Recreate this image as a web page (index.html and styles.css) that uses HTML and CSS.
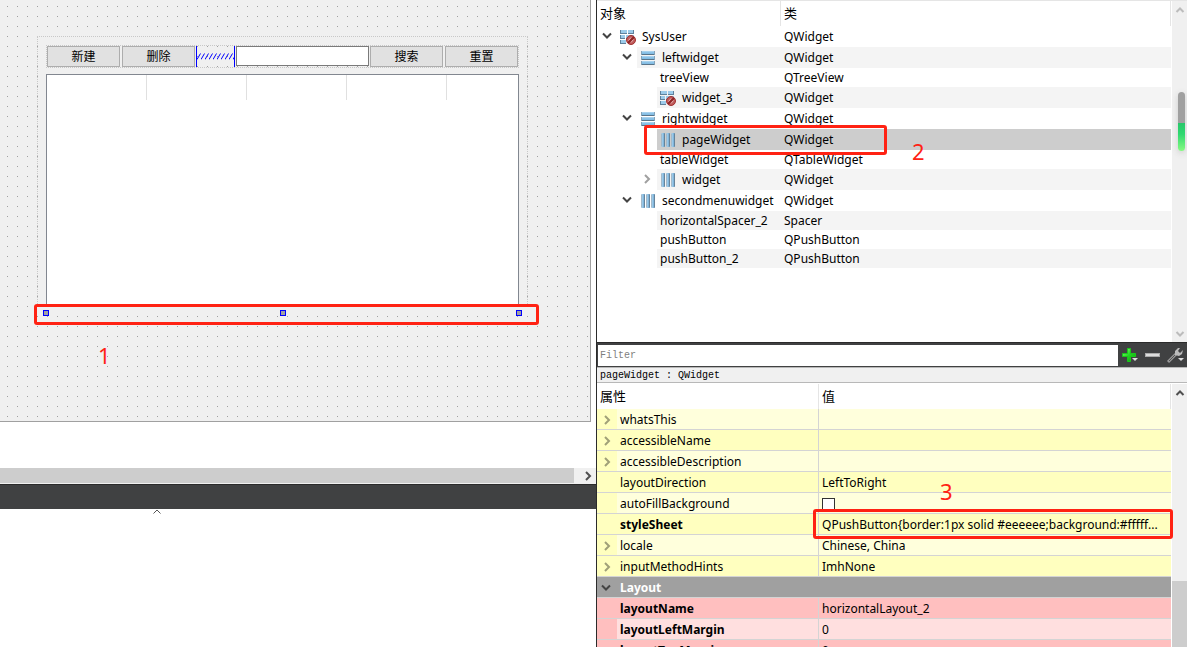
FILE: index.html
```html
<!DOCTYPE html>
<html lang="zh-CN">
<head>
<meta charset="utf-8">
<title>Qt Designer</title>
<link rel="stylesheet" href="styles.css">
</head>
<body>
<svg class="defs" aria-hidden="true">
  <defs>
    <linearGradient id="bar-h" x1="0" y1="0" x2="0" y2="1"><stop offset="0" stop-color="#b5d9f2"/><stop offset=".5" stop-color="#7fbbe3"/><stop offset="1" stop-color="#8fc3e6"/></linearGradient>
    <linearGradient id="bar-v" x1="0" y1="0" x2="1" y2="0"><stop offset="0" stop-color="#c4e0f4"/><stop offset=".5" stop-color="#8dc0e4"/><stop offset="1" stop-color="#5d95bd"/></linearGradient>
    <linearGradient id="green" x1="0" y1="0" x2="1" y2="1"><stop offset="0" stop-color="#8dff7a"/><stop offset=".5" stop-color="#22d422"/><stop offset="1" stop-color="#08a008"/></linearGradient>
    <symbol id="down" viewBox="0 0 10 8"><path d="M1 1.500 5 5.500 9 1.500" fill="none" stroke="#444" stroke-width="2"/></symbol>
    <symbol id="right" viewBox="0 0 8 10"><path d="M2 1 6 5 2 9" fill="none" stroke="currentColor" stroke-width="2"/></symbol>
    <symbol id="up" viewBox="0 0 10 8"><path d="M1.500 6 5 2.500 8.500 6" fill="none" stroke="currentColor" stroke-width="2"/></symbol>
    <symbol id="vbox" viewBox="0 0 16 16"><g fill="url(#bar-h)"><rect x="1" y="1" width="14" height="4" rx="1"/><rect x="1" y="6" width="14" height="4" rx="1"/><rect x="1" y="11" width="14" height="4" rx="1"/></g><path d="M1.500 4.500h13M1.500 9.500h13M1.500 14.500h13" stroke="#5b7488"/><path d="M1.500 1v3M14.500 1v3M1.500 6v3M14.500 6v3M1.500 11v3M14.500 11v3" stroke="#86a3b8"/></symbol>
    <symbol id="hbox" viewBox="0 0 16 16"><g fill="url(#bar-v)"><rect x="1" y="1" width="4" height="14" rx="1"/><rect x="6" y="1" width="4" height="14" rx="1"/><rect x="11" y="1" width="4" height="14" rx="1"/></g><path d="M4.500 1.500v13M9.500 1.500v13M14.500 1.500v13" stroke="#66839a"/><path d="M1.500 1.500v13M6.500 1.500v13M11.500 1.500v13" stroke="#a3b9c9"/></symbol>
    <symbol id="broken" viewBox="0 0 16 16"><path d="M0 1h7v3H0zM8 1h6v3H8zM0 6h5v3H0zM6 6h8v3H6zM0 11h6v3H0z" fill="#9ccbea"/><path d="M0 4.500h7M8 4.500h6M0 9.500h5M6 9.500h8M0 14.500h6M.5 1v3M.5 6v3M.5 11v3M13.500 1v3" stroke="#60819b"/><circle cx="11" cy="11" r="4.500" fill="#c05a5a" stroke="#a03232"/><path d="M8 14 14 8" stroke="#8f2626" stroke-width="2"/><path d="M8.500 11.500 11 8.500M11 13.500 13.500 10.500" stroke="#e3b4b4"/></symbol>
  </defs>
</svg>
<div class="workspace">
  <section class="editor">
    <div class="canvas">
      <div class="form">
        <div class="tools">
          <div class="pair"><button class="push">新建</button><button class="push">删除</button></div>
          <svg class="spacer" aria-hidden="true"><defs><pattern id="hatch" width="4" height="7" y="7" patternUnits="userSpaceOnUse"><path d="M0 6.500 3.500 .5" stroke="#00f" fill="none"/></pattern></defs><rect y="7" width="100%" height="7" fill="url(#hatch)"/></svg>
          <input class="search" type="text" aria-label="搜索">
          <div class="pair"><button class="push">搜索</button><button class="push">重置</button></div>
        </div>
        <div class="grid"><i></i><i></i><i></i><i></i></div>
      </div>
      <div class="frame frame-one"><i class="handle"></i><i class="handle"></i><i class="handle"></i></div>
      <span class="mark mark-one">1</span>
    </div>
    <div class="hscroll"><div class="hthumb"></div><svg class="side"><use href="#right"/></svg></div>
    <div class="divider"></div>
    <svg class="fold" viewBox="0 0 8 5"><path d="M.5 4.500 4 1 7.500 4.500" fill="none" stroke="#555"/></svg>
  </section>
  <section class="panel">
    <div class="objects">
      <table class="tree">
        <colgroup><col class="col-name"><col></colgroup>
        <thead><tr><th>对象</th><th>类</th></tr></thead>
        <tbody>
          <tr><td><div class="node"><svg class="arrow"><use href="#down"/></svg><span class="label"><svg class="icon"><use href="#broken"/></svg>SysUser</span></div></td><td>QWidget</td></tr>
          <tr class="alt"><td><div class="node l1"><svg class="arrow"><use href="#down"/></svg><span class="label"><svg class="icon"><use href="#vbox"/></svg>leftwidget</span></div></td><td>QWidget</td></tr>
          <tr class="short"><td><div class="node l2"><span class="label">treeView</span></div></td><td>QTreeView</td></tr>
          <tr class="alt"><td><div class="node l2"><span class="label"><svg class="icon"><use href="#broken"/></svg>widget_3</span></div></td><td>QWidget</td></tr>
          <tr><td><div class="node l1"><svg class="arrow"><use href="#down"/></svg><span class="label"><svg class="icon"><use href="#vbox"/></svg>rightwidget</span></div></td><td>QWidget</td></tr>
          <tr class="selected"><td><div class="node l2"><span class="label"><svg class="icon"><use href="#hbox"/></svg>pageWidget</span></div></td><td>QWidget</td></tr>
          <tr class="short"><td><div class="node l2"><span class="label">tableWidget</span></div></td><td>QTableWidget</td></tr>
          <tr class="alt"><td><div class="node l2"><svg class="arrow closed"><use href="#right"/></svg><span class="label"><svg class="icon"><use href="#hbox"/></svg>widget</span></div></td><td>QWidget</td></tr>
          <tr><td><div class="node l1"><svg class="arrow"><use href="#down"/></svg><span class="label"><svg class="icon"><use href="#hbox"/></svg>secondmenuwidget</span></div></td><td>QWidget</td></tr>
          <tr class="alt short"><td><div class="node l2"><span class="label">horizontalSpacer_2</span></div></td><td>Spacer</td></tr>
          <tr class="short"><td><div class="node l2"><span class="label">pushButton</span></div></td><td>QPushButton</td></tr>
          <tr class="alt short"><td><div class="node l2"><span class="label">pushButton_2</span></div></td><td>QPushButton</td></tr>
        </tbody>
      </table>
      <div class="vscroll faint"><svg class="tip"><use href="#up"/></svg><svg class="tip flip"><use href="#up"/></svg></div>
      <div class="meter"></div>
      <div class="frame frame-two"></div>
      <span class="mark mark-two">2</span>
    </div>
    <div class="filterbar">
      <input class="filter" type="text" placeholder="Filter" aria-label="Filter">
      <button class="tool" aria-label="Add"><svg viewBox="0 0 18 18"><path d="M7.500 2.500h3v5h5v3h-5v5h-3v-5h-5v-3h5z" fill="url(#green)" stroke="#19c819"/><path d="M12 12h6l-3 3z" fill="#ddd"/></svg></button>
      <button class="tool" aria-label="Remove"><svg viewBox="0 0 18 18"><rect x="2.500" y="7.500" width="14" height="3" fill="#ddd" stroke="#aaa"/></svg></button>
      <button class="tool" aria-label="Configure"><svg viewBox="0 0 18 18"><path d="M2 16 10 8" stroke="#999" stroke-width="3"/><path d="M3 15 10 8" stroke="#555"/><path d="M9 9 9 5 12 2 14 2 12 5 14 7 17 4 16 8 13 10z" fill="#bbb"/><path d="M12 12h6l-3 3z" fill="#ddd"/></svg></button>
    </div>
    <div class="caption">pageWidget : QWidget</div>
    <div class="properties">
      <table class="props">
        <colgroup><col class="col-fold"><col class="col-prop"><col></colgroup>
        <thead><tr><th colspan="2">属性</th><th>值</th></tr></thead>
        <tbody>
          <tr class="pale"><td><svg class="arrow"><use href="#right"/></svg></td><td>whatsThis</td><td></td></tr>
          <tr class="deep"><td><svg class="arrow"><use href="#right"/></svg></td><td>accessibleName</td><td></td></tr>
          <tr class="pale"><td><svg class="arrow"><use href="#right"/></svg></td><td>accessibleDescription</td><td></td></tr>
          <tr class="deep"><td></td><td>layoutDirection</td><td>LeftToRight</td></tr>
          <tr class="pale"><td></td><td><label for="autofill">autoFillBackground</label></td><td><input class="check" id="autofill" type="checkbox"></td></tr>
          <tr class="deep"><td></td><td class="strong">styleSheet</td><td>QPushButton{border:1px solid #eeeeee;background:#fffff...</td></tr>
          <tr class="pale"><td><svg class="arrow"><use href="#right"/></svg></td><td>locale</td><td>Chinese, China</td></tr>
          <tr class="deep"><td><svg class="arrow"><use href="#right"/></svg></td><td>inputMethodHints</td><td>ImhNone</td></tr>
          <tr class="group"><td><svg class="arrow open"><use href="#down"/></svg></td><td colspan="2">Layout</td></tr>
          <tr class="rose"><td></td><td class="strong">layoutName</td><td>horizontalLayout_2</td></tr>
          <tr class="blush"><td></td><td class="strong">layoutLeftMargin</td><td>0</td></tr>
          <tr class="rose"><td></td><td class="strong">layoutTopMargin</td><td>0</td></tr>
        </tbody>
      </table>
      <div class="vscroll"><svg class="tip"><use href="#up"/></svg><div class="vthumb"></div></div>
      <div class="frame frame-three"></div>
      <span class="mark mark-three">3</span>
    </div>
  </section>
</div>
</body>
</html>
```
FILE: styles.css
```css
* { box-sizing: border-box; }
body {
  margin: 0;
  height: 100vh;
  overflow: hidden;
  background: #fff;
  color: #000;
  font: 12px/16px "Noto Sans", "Noto Sans CJK SC", sans-serif;
}
button, input { font: inherit; margin: 0; padding: 0; border-radius: 0; }
svg { display: block; flex: none; }
.defs { position: absolute; width: 0; height: 0; }
.workspace { display: grid; grid-template-columns: minmax(0, 597fr) minmax(0, 590fr); height: 100%; }

/* form editor */
.editor { border-right: 1px solid #2b2b2b; }
.canvas {
  position: relative;
  margin-right: 5px;
  height: 422px;
  padding: 36px 62px 0 37px;
  border: solid #a0a0a0;
  border-width: 0 1px 1px 0;
  background:
    linear-gradient(#f0f0f0 9px, transparent 9px) 0 7px / 10px 10px,
    linear-gradient(90deg, #a0a0a0 1px, #f0f0f0 1px) 7px 0 / 10px 10px;
}
.form { height: 286px; padding: 8px 8px 0; border: 1px dotted #c8c8c8; }
.tools { display: flex; gap: 1px; height: 23px; border: 1px dotted #c8c8c8; }
.pair { display: flex; gap: 2px; }
.push { width: 73px; height: 21px; border: 1px solid #adadad; background: #e1e1e1; color: #000; line-height: 19px; }
.spacer { width: 39px; height: 21px; border: solid #00f; border-width: 0 1px; }
.search { flex: 1; min-width: 0; height: 20px; border: 1px solid #7a7a7a; background: #fff; }
.grid { display: flex; height: 231px; margin-top: 6px; border: 1px solid #828790; background: #fff; }
.grid i { width: 100px; height: 25px; border-right: 1px solid #e0e0e0; }

.frame { position: absolute; border: 3px solid #ff2213; border-radius: 3px; }
.frame-one {
  display: flex;
  justify-content: space-between;
  left: 34px;
  right: 51px;
  top: 304px;
  height: 21px;
  padding: 3px 14px 0 6px;
  background: linear-gradient(90deg, #a0a0a0 1px, transparent 1px) 0 9px / 10px 1px repeat-x #f0f0f0;
}
.handle { width: 6px; height: 6px; border: 1px solid #00f; background: #a0a0a0; }
.mark { position: absolute; color: #ff2213; font: 22px/24px "Noto Sans", sans-serif; }
.mark-one { left: 98px; top: 343px; }

.hscroll { display: flex; align-items: flex-start; height: 16px; margin-top: 46px; background: #f0f0f0; }
.hthumb { flex: 1; height: 15px; background: #cdcdcd; }
.side { width: 8px; height: 10px; margin: 3px 4px 0 10px; color: #505050; }
.divider { height: 25px; border-top: 1px solid #2b2b2b; background: #404142; }
.fold { width: 8px; height: 5px; margin-left: 153px; }

/* shared table look */
table { flex: 1; width: 100%; min-width: 0; border-collapse: separate; border-spacing: 0; table-layout: fixed; }
th, td { padding: 0; text-align: left; font-weight: 400; white-space: nowrap; overflow: hidden; }
th { height: 25px; padding: 0 0 1px 3px; border-right: 1px solid #e5e5e5; font-size: 13px; }
.arrow { width: 10px; height: 10px; margin: 0 5px; }
.vscroll { display: flex; flex: none; flex-direction: column; align-items: center; justify-content: space-between; width: 15px; margin-left: 1px; padding: 5px 0 4px; background: #f0f0f0; color: #505050; }
.faint { color: #bcbcbc; }
.tip { width: 10px; height: 8px; }
.flip { transform: rotate(180deg); }

/* object tree */
.objects { position: relative; display: flex; height: 342px; border-top: 1px solid #e5e5e5; }
.tree { align-self: flex-start; }
.col-name { width: 184px; }
.tree td { height: 21px; }
.tree .short td { height: 19px; }
.tree td + td { padding: 1px 0 0 3px; }
.node { display: flex; height: 21px; }
.short .node { height: 19px; }
.l1 { padding-left: 20px; }
.l2 { padding-left: 40px; }
.node .arrow { margin-top: 5px; }
.label { display: flex; flex: 1; align-items: center; gap: 6px; padding: 1px 0 0 3px; }
.label:first-child { margin-left: 20px; }
.icon { width: 16px; height: 16px; }
.closed { color: #a0a0a0; }
.alt .label, .alt td + td { background: #f4f4f4; }
.selected .label, .selected td + td { background: #cdcdcd; }
.meter { position: absolute; right: 2px; top: 91px; width: 7px; height: 59px; border-radius: 4px; background: linear-gradient(#a0a0a0 31px, #28c76a 31px, #2fd870 42px, #86fa82); box-shadow: 0 2px 6px #ccc; }
.frame-two { left: 47px; top: 124px; width: 243px; height: 30px; }
.mark-two { left: 315px; top: 138px; }

/* filter */
.filterbar { display: flex; align-items: center; height: 25px; border-top: 1px solid #2b2b2b; background: #404142; }
.filter { flex: 1; min-width: 0; height: 21px; margin-left: 1px; padding-left: 2px; border: 0; background: #fff; font: 10px/12px "Liberation Mono", monospace; }
.filter::placeholder { color: #808080; opacity: 1; }
.tool { width: 23px; height: 21px; padding: 0 2px; border: 0; background: none; }
.tool svg { width: 18px; height: 18px; }
.caption { height: 16px; padding-left: 3px; border: solid #b8b8b8; border-width: 1px 0; background: #f0f0f0; font: 10px/16px "Liberation Mono", monospace; }

/* properties */
.properties { position: relative; display: flex; height: 264px; padding-top: 1px; overflow: hidden; }
.props { align-self: flex-start; }
.props .col-fold { width: 20px; }
.props .col-prop { width: 202px; }
.props td { height: 21px; padding-top: 2px; border-bottom: 1px solid #d4d4d4; }
.props td:nth-child(2), .props td:nth-child(3) { padding-left: 3px; }
.props td:nth-child(2):not([colspan]) { border-right: 1px solid #d4d4d4; }
.props .arrow { width: 8px; margin: 0 6px; color: #a0a078; }
.props .open { width: 10px; margin: 0 4px; }
.pale { background: #ffffdc; }
.deep, .pale td:first-child { background: #ffffbf; }
.rose, .blush td:first-child { background: #ffbfbf; }
.blush { background: #ffdfdf; }
.group { background: #a0a0a0; color: #fff; }
.group td, .strong { font-weight: 700; }
.check { display: block; appearance: none; width: 13px; height: 13px; border: 1px solid #333; background: #fff; }
.properties .vscroll { padding-bottom: 0; }
.vthumb { width: 15px; height: 66px; background: #cdcdcd; }
.frame-three { left: 216px; right: 14px; top: 126px; height: 30px; }
.mark-three { left: 343px; top: 96px; }
```
